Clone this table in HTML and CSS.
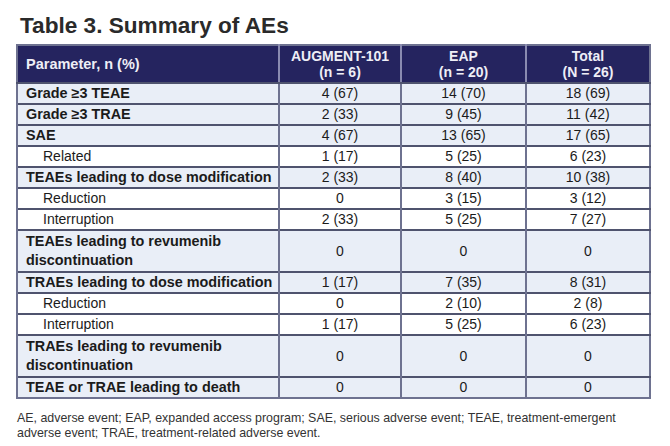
FILE: index.html
```html
<!DOCTYPE html>
<html>
<head>
<meta charset="utf-8">
<link rel="stylesheet" href="styles.css">
</head>
<body>
<div class="page">
  <h1 class="title">Table 3. Summary of AEs</h1>
  <table class="ae">
    <colgroup>
      <col class="c1"><col class="c2"><col class="c3"><col class="c4">
    </colgroup>
    <thead>
      <tr>
        <th class="param">Parameter, n (%)</th>
        <th>AUGMENT-101<br>(n = 6)</th>
        <th>EAP<br>(n = 20)</th>
        <th>Total<br>(N = 26)</th>
      </tr>
    </thead>
    <tbody>
      <tr class="main"><td>Grade ≥3 TEAE</td><td>4 (67)</td><td>14 (70)</td><td>18 (69)</td></tr>
      <tr class="main"><td>Grade ≥3 TRAE</td><td>2 (33)</td><td>9 (45)</td><td>11 (42)</td></tr>
      <tr class="main"><td>SAE</td><td>4 (67)</td><td>13 (65)</td><td>17 (65)</td></tr>
      <tr class="sub"><td>Related</td><td>1 (17)</td><td>5 (25)</td><td>6 (23)</td></tr>
      <tr class="main"><td>TEAEs leading to dose modification</td><td>2 (33)</td><td>8 (40)</td><td>10 (38)</td></tr>
      <tr class="sub"><td>Reduction</td><td>0</td><td>3 (15)</td><td>3 (12)</td></tr>
      <tr class="sub"><td>Interruption</td><td>2 (33)</td><td>5 (25)</td><td>7 (27)</td></tr>
      <tr class="main double"><td>TEAEs leading to revumenib discontinuation</td><td>0</td><td>0</td><td>0</td></tr>
      <tr class="main"><td>TRAEs leading to dose modification</td><td>1 (17)</td><td>7 (35)</td><td>8 (31)</td></tr>
      <tr class="sub"><td>Reduction</td><td>0</td><td>2 (10)</td><td>2 (8)</td></tr>
      <tr class="sub"><td>Interruption</td><td>1 (17)</td><td>5 (25)</td><td>6 (23)</td></tr>
      <tr class="main double"><td>TRAEs leading to revumenib discontinuation</td><td>0</td><td>0</td><td>0</td></tr>
      <tr class="main"><td>TEAE or TRAE leading to death</td><td>0</td><td>0</td><td>0</td></tr>
    </tbody>
  </table>
  <p class="note">AE, adverse event; EAP, expanded access program; SAE, serious adverse event; TEAE, treatment-emergent adverse event; TRAE, treatment-related adverse event.</p>
</div>
</body>
</html>
```
FILE: styles.css
```css
html, body {
  margin: 0;
  padding: 0;
  background: #ffffff;
}

.page {
  width: 670px;
  height: 446px;
  padding: 12px 0 0 16px;
  box-sizing: border-box;
  font-family: "Liberation Sans", Arial, sans-serif;
  color: #1b1b1b;
}

.title {
  margin: 0 0 0 4px;
  font-size: 22.6px;
  line-height: 28px;
  font-weight: bold;
  color: #2a2a2a;
  height: 32px;
}

.ae {
  border-collapse: collapse;
  width: 633px;
  table-layout: fixed;
  border: 2px solid #6e7290;
  font-size: 14px;
}

.c1 { width: 262px; }
.c2 { width: 122px; }
.c3 { width: 125px; }
.c4 { width: 124px; }

.ae th {
  background: #25245f;
  color: #eeeef6;
  font-weight: bold;
  font-size: 14px;
  line-height: 16px;
  padding: 2px 6px;
  text-align: center;
  border-left: 2px solid #8a8bb0;
  border-bottom: 2px solid #4f536e;
}

.ae th.param {
  text-align: left;
  border-left: none;
  padding-left: 8px;
  font-size: 14.5px;
}

.ae td {
  line-height: 19px;
  padding: 0 6px;
  text-align: center;
  border-top: 2px solid #4f536e;
  border-left: 2px solid #6e7290;
  white-space: nowrap;
}

.ae td:first-child {
  text-align: left;
  padding: 0 2px 0 8px;
}

.main td {
  background: #e9eef7;
}

.main td:first-child {
  font-weight: bold;
  font-size: 14.4px;
}

.double td {
  padding-top: 1px;
  padding-bottom: 1px;
}

.double td:first-child {
  white-space: normal;
  padding: 1px 40px 1px 8px;
}

.sub td {
  background: #ffffff;
}

.sub td:first-child {
  padding-left: 25px;
}

.note {
  margin: 12px 0 0 1px;
  width: 615px;
  font-size: 12.4px;
  line-height: 15px;
  color: #333333;
}
```
